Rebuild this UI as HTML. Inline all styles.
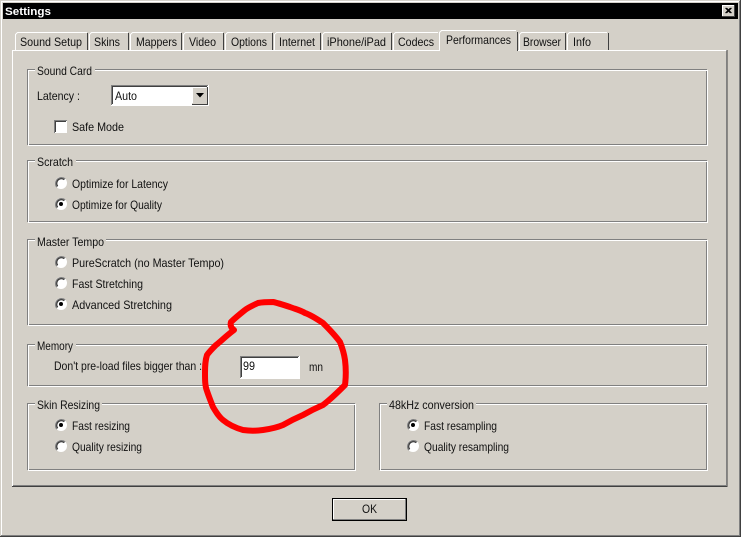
<!DOCTYPE html>
<html><head><meta charset="utf-8"><title>Settings</title>
<style>
html,body{margin:0;padding:0;background:#d4d0c8;width:741px;height:537px;overflow:hidden}
svg{display:block}
text{font-family:"Liberation Sans",sans-serif;font-size:12px;fill:#111;filter:blur(.25px)}
</style></head><body>
<svg width="741" height="537" viewBox="0 0 741 537" xmlns="http://www.w3.org/2000/svg">
<defs>
<g id="radio">
<circle cx="0" cy="0" r="6" fill="#fff"/>
<path d="M-4.200 4.200A6 6 0 0 1 4.200 -4.200" fill="none" stroke="#808080" stroke-width="1.200"/>
<path d="M-3.300 3.300A4.700 4.700 0 0 1 3.300 -3.300" fill="none" stroke="#333" stroke-width="1.200"/>
</g>
</defs>
<rect width="741" height="537" fill="#d4d0c8"/>
<!-- window frame -->
<rect x="1" y="1" width="739" height="1" fill="#fff"/>
<rect x="1" y="1" width="1" height="535" fill="#fff"/>
<rect x="739" y="1" width="1" height="535" fill="#808080"/>
<rect x="740" y="0" width="1" height="537" fill="#404040"/>
<rect x="1" y="535" width="739" height="1" fill="#808080"/>
<rect x="0" y="536" width="741" height="1" fill="#404040"/>
<!-- title -->
<rect x="3" y="3" width="735" height="16" fill="#000"/>
<text x="5" y="15" font-weight="bold" style="fill:#fff;font-size:11px" textLength="46" lengthAdjust="spacingAndGlyphs">Settings</text>
<rect x="722" y="5" width="13" height="12" fill="#d4d0c8"/>
<path d="M722.500 16.500V5.500H734.500" fill="none" stroke="#fff"/>
<path d="M734.500 5V16.500H722" fill="none" stroke="#404040"/>
<path d="M725.500 8l5 5M726.500 8l5 5M730.500 8l-5 5M731.500 8l-5 5" stroke="#000" fill="none"/>
<!-- panel -->
<path d="M12.500 486V50.500H727" fill="none" stroke="#fff"/>
<path d="M727 50V486.500H12" fill="none" stroke="#404040"/>
<rect x="726" y="51" width="1" height="435" fill="#808080"/>
<rect x="13" y="485" width="714" height="1" fill="#808080"/>
<!-- tabs -->
<g fill="none">
<path d="M15.500 50V34.500L17.500 32.500H87" stroke="#fff"/><path d="M87.500 33V50" stroke="#404040"/>
<path d="M89.500 50V34.500L91.500 32.500H128" stroke="#fff"/><path d="M128.500 33V50" stroke="#404040"/>
<path d="M130.500 50V34.500L132.500 32.500H181" stroke="#fff"/><path d="M181.500 33V50" stroke="#404040"/>
<path d="M183.500 50V34.500L185.500 32.500H223" stroke="#fff"/><path d="M223.500 33V50" stroke="#404040"/>
<path d="M225.500 50V34.500L227.500 32.500H272" stroke="#fff"/><path d="M272.500 33V50" stroke="#404040"/>
<path d="M274.500 50V34.500L276.500 32.500H320" stroke="#fff"/><path d="M320.500 33V50" stroke="#404040"/>
<path d="M322.500 50V34.500L324.500 32.500H391" stroke="#fff"/><path d="M391.500 33V50" stroke="#404040"/>
<path d="M393.500 50V34.500L395.500 32.500H438" stroke="#fff"/>
<rect x="439" y="31" width="79" height="21" fill="#d4d0c8" stroke="none"/>
<path d="M439.500 51V32.500L441.500 30.500H516" stroke="#fff"/><path d="M517.500 32V51" stroke="#404040"/>
<path d="M519.500 50V34.500L521.500 32.500H565" stroke="#fff"/><path d="M565.500 33V50" stroke="#404040"/>
<path d="M567.500 50V34.500L569.500 32.500H607" stroke="#fff"/><path d="M608.500 33V50" stroke="#404040"/>
</g>
<text x="20" y="46" textLength="62" lengthAdjust="spacingAndGlyphs">Sound Setup</text>
<text x="94" y="46" textLength="26" lengthAdjust="spacingAndGlyphs">Skins</text>
<text x="136" y="46" textLength="41" lengthAdjust="spacingAndGlyphs">Mappers</text>
<text x="189" y="46" textLength="27" lengthAdjust="spacingAndGlyphs">Video</text>
<text x="231" y="46" textLength="36" lengthAdjust="spacingAndGlyphs">Options</text>
<text x="279" y="46" textLength="36" lengthAdjust="spacingAndGlyphs">Internet</text>
<text x="327" y="46" textLength="59" lengthAdjust="spacingAndGlyphs">iPhone/iPad</text>
<text x="398" y="46" textLength="36" lengthAdjust="spacingAndGlyphs">Codecs</text>
<text x="446" y="44" textLength="65" lengthAdjust="spacingAndGlyphs">Performances</text>
<text x="523" y="46" textLength="38" lengthAdjust="spacingAndGlyphs">Browser</text>
<text x="573" y="46" textLength="18" lengthAdjust="spacingAndGlyphs">Info</text>
<!-- group boxes -->
<g fill="none">
<rect x="27.500" y="69.500" width="679" height="75" stroke="#808080"/><rect x="28.500" y="70.500" width="679" height="75" stroke="#fff"/>
<rect x="27.500" y="160.500" width="679" height="61" stroke="#808080"/><rect x="28.500" y="161.500" width="679" height="61" stroke="#fff"/>
<rect x="27.500" y="239.500" width="679" height="85" stroke="#808080"/><rect x="28.500" y="240.500" width="679" height="85" stroke="#fff"/>
<rect x="27.500" y="344.500" width="679" height="41" stroke="#808080"/><rect x="28.500" y="345.500" width="679" height="41" stroke="#fff"/>
<rect x="27.500" y="403.500" width="327" height="66" stroke="#808080"/><rect x="28.500" y="404.500" width="327" height="66" stroke="#fff"/>
<rect x="379.500" y="403.500" width="327" height="66" stroke="#808080"/><rect x="380.500" y="404.500" width="327" height="66" stroke="#fff"/>
</g>
<rect x="35" y="66" width="60" height="8" fill="#d4d0c8"/>
<rect x="35" y="157" width="41" height="8" fill="#d4d0c8"/>
<rect x="35" y="236" width="71" height="8" fill="#d4d0c8"/>
<rect x="35" y="341" width="41" height="8" fill="#d4d0c8"/>
<rect x="35" y="400" width="67" height="8" fill="#d4d0c8"/>
<rect x="387" y="400" width="89" height="8" fill="#d4d0c8"/>
<text x="37" y="75" textLength="55" lengthAdjust="spacingAndGlyphs">Sound Card</text>
<text x="37" y="100" textLength="43" lengthAdjust="spacingAndGlyphs">Latency :</text>
<text x="72" y="131" textLength="52" lengthAdjust="spacingAndGlyphs">Safe Mode</text>
<text x="37" y="166" textLength="36" lengthAdjust="spacingAndGlyphs">Scratch</text>
<text x="72" y="188" textLength="96" lengthAdjust="spacingAndGlyphs">Optimize for Latency</text>
<text x="72" y="209" textLength="90" lengthAdjust="spacingAndGlyphs">Optimize for Quality</text>
<text x="37" y="246" textLength="67" lengthAdjust="spacingAndGlyphs">Master Tempo</text>
<text x="72" y="267" textLength="152" lengthAdjust="spacingAndGlyphs">PureScratch (no Master Tempo)</text>
<text x="72" y="288" textLength="71" lengthAdjust="spacingAndGlyphs">Fast Stretching</text>
<text x="72" y="309" textLength="100" lengthAdjust="spacingAndGlyphs">Advanced Stretching</text>
<text x="37" y="350" textLength="36" lengthAdjust="spacingAndGlyphs">Memory</text>
<text x="54" y="370" textLength="148" lengthAdjust="spacingAndGlyphs">Don't pre-load files bigger than :</text>
<text x="309" y="371" textLength="14" lengthAdjust="spacingAndGlyphs">mn</text>
<text x="37" y="409" textLength="63" lengthAdjust="spacingAndGlyphs">Skin Resizing</text>
<text x="72" y="430" textLength="58" lengthAdjust="spacingAndGlyphs">Fast resizing</text>
<text x="72" y="451" textLength="70" lengthAdjust="spacingAndGlyphs">Quality resizing</text>
<text x="389" y="409" textLength="85" lengthAdjust="spacingAndGlyphs">48kHz conversion</text>
<text x="424" y="430" textLength="73" lengthAdjust="spacingAndGlyphs">Fast resampling</text>
<text x="424" y="451" textLength="85" lengthAdjust="spacingAndGlyphs">Quality resampling</text>
<!-- combobox -->
<rect x="111" y="85" width="98" height="21" fill="#fff"/>
<path d="M111.500 105V85.500H208" fill="none" stroke="#808080"/>
<path d="M112.500 104V86.500H207" fill="none" stroke="#404040"/>
<rect x="192" y="87" width="15" height="17" fill="#d4d0c8"/>
<path d="M192.500 103V87.500H206.500" fill="none" stroke="#fff"/>
<path d="M207.500 87V104.500H192" fill="none" stroke="#404040"/>
<path d="M196 93h8l-4 4.500z" fill="#000"/>
<text x="115" y="100" textLength="22" lengthAdjust="spacingAndGlyphs">Auto</text>
<!-- checkbox -->
<rect x="54" y="120" width="13" height="13" fill="#fff"/>
<path d="M54.500 133V120.500H67" fill="none" stroke="#808080"/>
<path d="M55.500 132V121.500H66" fill="none" stroke="#404040"/>
<!-- radios -->
<use href="#radio" x="61" y="183"/>
<use href="#radio" x="61" y="204"/><circle cx="61" cy="204" r="2" fill="#000"/>
<use href="#radio" x="61" y="262"/>
<use href="#radio" x="61" y="283"/>
<use href="#radio" x="61" y="304"/><circle cx="61" cy="304" r="2" fill="#000"/>
<use href="#radio" x="61" y="425"/><circle cx="61" cy="425" r="2" fill="#000"/>
<use href="#radio" x="61" y="446"/>
<use href="#radio" x="413" y="425"/><circle cx="413" cy="425" r="2" fill="#000"/>
<use href="#radio" x="413" y="446"/>
<!-- input -->
<rect x="240" y="356" width="60" height="23" fill="#fff"/>
<path d="M240.500 378V356.500H299" fill="none" stroke="#808080"/>
<path d="M241.500 377V357.500H298" fill="none" stroke="#404040"/>
<text x="243" y="370" textLength="12" lengthAdjust="spacingAndGlyphs">99</text>
<!-- button -->
<rect x="332.500" y="498.500" width="74" height="22" fill="#d4d0c8" stroke="#000"/>
<path d="M333.500 519V499.500H405" fill="none" stroke="#fff"/>
<path d="M405.500 499V519.500H333" fill="none" stroke="#808080"/>
<text x="362" y="513" textLength="15" lengthAdjust="spacingAndGlyphs">OK</text>
<!-- red circle -->
<path d="M234 330C226 336 220 342 216 345C212 349 209 352 207 355C205 361 205 367 205 373C205 380 205 386 207 391C209 397 211 402 213 407C216 412 219 417 223 420C229 425 236 428 243 430C250 431 256 431 263 430C270 429 276 428 283 425C290 421 296 418 303 415C310 411 316 408 323 405C331 399 338 392 345 385C346 377 346 368 345 360C344 353 342 347 340 342C335 335 329 329 323 323C317 319 311 315 305 313C300 310 295 309 290 307C284 305 278 303 273 302C268 302 263 302 258 303C254 305 249 307 245 310C240 314 235 318 231 322C230 325 231 328 234 330" fill="none" stroke="#f00" stroke-width="6" stroke-linejoin="round" stroke-linecap="round"/>
</svg>
</body></html>
